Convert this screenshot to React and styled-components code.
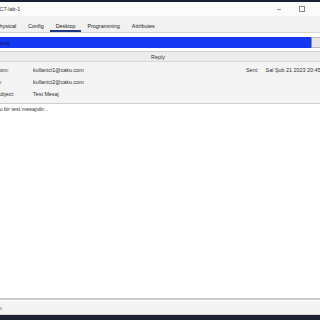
import styled, { createGlobalStyle } from "styled-components";

const Global = createGlobalStyle`
  html, body {
    margin: 0;
    padding: 0;
    width: 320px;
    height: 320px;
    overflow: hidden;
    background: #ffffff;
  }
  body {
    font-family: "Liberation Sans", Arial, sans-serif;
    font-size: 5.4px;
    color: #2a2a2a;
  }
`;

const Window = styled.div`
  margin-left: -12px;
  width: 340px;
  height: 320px;
  display: flex;
  flex-direction: column;
  background: #ffffff;
`;

const DarkStrip = styled.div`
  height: ${(p) => p.h}px;
  background: #1b2130;
  flex-shrink: 0;
`;

const TitleBar = styled.div`
  height: 14px;
  display: flex;
  align-items: center;
  justify-content: space-between;
  padding: 0 23px 0 8px;
  background: #fbfbfb;
  color: #333;
`;

const Controls = styled.div`
  display: flex;
  align-items: center;
  gap: 18px;
`;

const Minimize = styled.span`
  width: 4px;
  height: 1px;
  background: #999;
`;

const Maximize = styled.span`
  width: 4px;
  height: 4px;
  border: 1px solid #888;
`;

const TabBand = styled.div`
  height: 16px;
  display: flex;
  align-items: flex-end;
  background: #f1f1f1;
  border-bottom: 1px solid #d4d4d4;
  padding-left: 2px;
`;

const Tab = styled.div`
  padding: 0 6px;
  height: 11px;
  box-sizing: border-box;
  display: flex;
  align-items: center;
  color: #222;
  border-bottom: 2px solid ${(p) => (p.active ? "#1d3a86" : "transparent")};
`;

const Content = styled.div`
  flex: 1;
  display: flex;
  flex-direction: column;
  padding-top: 4px;
`;

const SubjectBar = styled.div`
  height: 11px;
  display: flex;
  align-items: stretch;
  margin-right: 2px;
`;

const BlueField = styled.div`
  flex: 1;
  background: #1437f2;
  display: flex;
  align-items: center;
  padding-left: 7px;
  color: #0c1a66;
`;

const SmallButton = styled.div`
  width: 13px;
  background: #e6e6e6;
  border: 1px solid #b9b9b9;
  border-left: 1px solid #8a8a8a;
`;

const ReplyBar = styled.div`
  margin-top: 3px;
  height: 9px;
  display: flex;
  align-items: center;
  justify-content: center;
  background: #ececec;
  border-top: 1px solid #cfcfcf;
  border-bottom: 1px solid #d8d8d8;
  color: #333;
`;

const Header = styled.div`
  height: 42px;
  background: #f4f4f4;
  border-bottom: 1px solid #cfcfcf;
  display: grid;
  grid-template-columns: 38px 213px auto;
  grid-auto-rows: 12px;
  padding: 2px 0 0 7px;
  box-sizing: border-box;
  align-items: center;
`;

const Label = styled.span`
  color: #333;
`;

const Value = styled.span`
  color: #333;
`;

const SentCell = styled.div`
  display: flex;
  gap: 7px;
  white-space: nowrap;
`;

const Body = styled.div`
  flex: 1;
  padding: 2px 8px;
  color: #333;
  border-bottom: 2px solid #cdcdcd;
`;

const StatusBar = styled.div`
  height: 13px;
  background: #f4f4f4;
  border-bottom: 1px solid #d6d6d6;
  margin-top: 1px;
  display: flex;
  align-items: center;
  padding-left: 5px;
  color: #555;
`;

export default function App() {
  return (
    <>
      <Global />
      <Window>
        <DarkStrip h={2} />
        <TitleBar>
          <span>PC7-lab-1</span>
          <Controls>
            <Minimize />
            <Maximize />
          </Controls>
        </TitleBar>
        <TabBand>
          <Tab>Physical</Tab>
          <Tab>Config</Tab>
          <Tab active>Desktop</Tab>
          <Tab>Programming</Tab>
          <Tab>Attributes</Tab>
        </TabBand>
        <Content>
          <SubjectBar>
            <BlueField>Mesaj</BlueField>
            <SmallButton />
          </SubjectBar>
          <ReplyBar>Reply</ReplyBar>
          <Header>
            <Label>From:</Label>
            <Value>kullanici1@caku.com</Value>
            <SentCell>
              <Label>Sent:</Label>
              <Value>Sal Şub 21 2023 20:45:10</Value>
            </SentCell>
            <Label>To:</Label>
            <Value>kullanici2@caku.com</Value>
            <span />
            <Label>Subject:</Label>
            <Value>Test Mesaj</Value>
            <span />
          </Header>
          <Body>Bu bir test mesajıdır...</Body>
          <StatusBar>Top</StatusBar>
        </Content>
        <DarkStrip h={5} />
      </Window>
    </>
  );
}
